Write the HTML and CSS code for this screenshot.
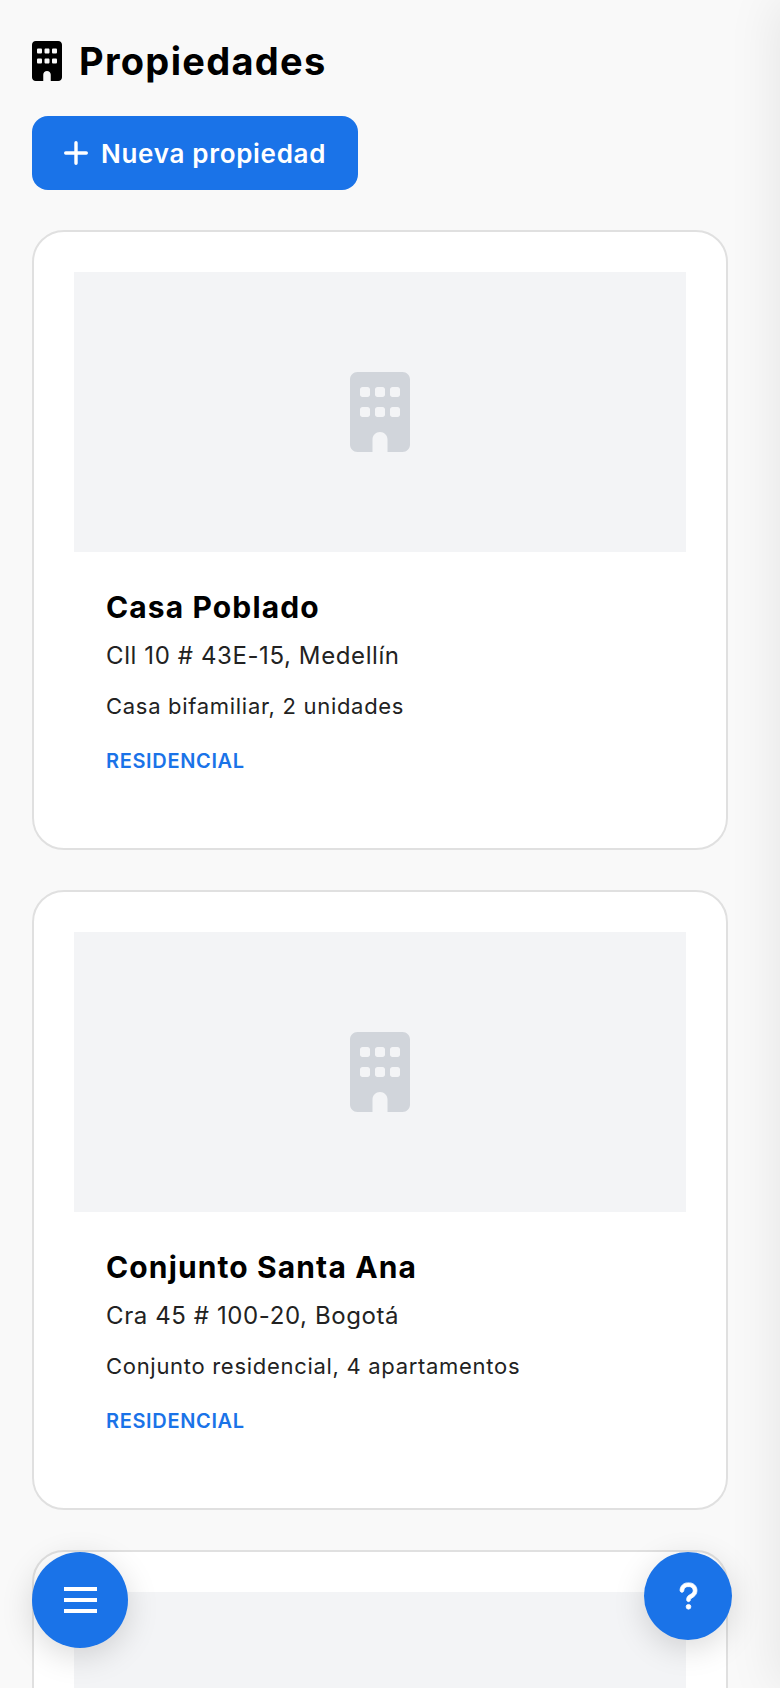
FILE: index.html
```html
<!DOCTYPE html>
<html lang="es">
<head>
<meta charset="utf-8">
<title>Propiedades</title>
<link rel="stylesheet" href="styles.css">
</head>
<body>
<svg class="sprite" width="0" height="0" aria-hidden="true">
  <symbol id="building" viewBox="0 0 384 512"><path d="M48 0C21.5 0 0 21.5 0 48V464c0 26.5 21.5 48 48 48h96V432c0-26.5 21.5-48 48-48s48 21.5 48 48v80h96c26.5 0 48-21.5 48-48V48c0-26.5-21.5-48-48-48H48zM64 240c0-8.8 7.2-16 16-16h32c8.8 0 16 7.2 16 16v32c0 8.8-7.2 16-16 16H80c-8.8 0-16-7.2-16-16V240zm112-16h32c8.8 0 16 7.2 16 16v32c0 8.8-7.2 16-16 16H176c-8.8 0-16-7.2-16-16V240c0-8.8 7.2-16 16-16zm80 16c0-8.8 7.2-16 16-16h32c8.8 0 16 7.2 16 16v32c0 8.8-7.2 16-16 16H272c-8.8 0-16-7.2-16-16V240zM80 96h32c8.8 0 16 7.2 16 16v32c0 8.8-7.2 16-16 16H80c-8.8 0-16-7.2-16-16V112c0-8.8 7.2-16 16-16zm80 16c0-8.8 7.2-16 16-16h32c8.8 0 16 7.2 16 16v32c0 8.8-7.2 16-16 16H176c-8.8 0-16-7.2-16-16V112zM272 96h32c8.8 0 16 7.2 16 16v32c0 8.8-7.2 16-16 16H272c-8.8 0-16-7.2-16-16V112c0-8.8 7.2-16 16-16z"/></symbol>
</svg>
<main class="page">
  <h1 class="title"><svg class="title-icon"><use href="#building"/></svg>Propiedades</h1>
  <button class="add-btn" type="button">
    <svg class="plus" viewBox="0 0 24 24"><path d="M12 1.7v20.6M1.7 12h20.6"/></svg>
    <span>Nueva propiedad</span>
  </button>
  <section class="list">
    <article class="card">
      <div class="thumb"><svg class="thumb-icon"><use href="#building"/></svg></div>
      <div class="info">
        <h2 class="name">Casa Poblado</h2>
        <p class="address">Cll 10 # 43E-15, Medellín</p>
        <p class="desc">Casa bifamiliar, 2 unidades</p>
        <p class="tag">RESIDENCIAL</p>
      </div>
    </article>
    <article class="card">
      <div class="thumb"><svg class="thumb-icon"><use href="#building"/></svg></div>
      <div class="info">
        <h2 class="name">Conjunto Santa Ana</h2>
        <p class="address">Cra 45 # 100-20, Bogotá</p>
        <p class="desc">Conjunto residencial, 4 apartamentos</p>
        <p class="tag">RESIDENCIAL</p>
      </div>
    </article>
    <article class="card">
      <div class="thumb"><svg class="thumb-icon"><use href="#building"/></svg></div>
    </article>
  </section>
</main>
<button class="fab fab-menu" type="button" aria-label="Menú">
  <svg class="bars" viewBox="0 0 33 26"><path d="M0 2h33M0 13h33M0 24h33"/></svg>
</button>
<button class="fab fab-help" type="button" aria-label="Ayuda">
  <svg class="question" viewBox="0 0 320 512"><path d="M80 160c0-35.3 28.7-64 64-64h32c35.3 0 64 28.7 64 64v3.6c0 21.8-11.1 42.1-29.4 53.8l-42.2 27.1c-25.2 16.2-40.4 44.1-40.4 74V320c0 17.7 14.3 32 32 32s32-14.3 32-32v-1.4c0-8.2 4.2-15.8 11-20.2l42.2-27.1c36.6-23.6 58.8-64.1 58.8-107.7V160c0-70.7-57.3-128-128-128H144C73.3 32 16 89.3 16 160c0 17.7 14.3 32 32 32s32-14.3 32-32zm80 320a40 40 0 1 0 0-80 40 40 0 1 0 0 80z"/></svg>
</button>
<aside class="drawer"></aside>
</body>
</html>
```
FILE: styles.css
```css
* { box-sizing: border-box; }
html { overflow: hidden; height: 100%; }
body {
  margin: 0;
  height: 100%;
  overflow: hidden;
  background: #f9f9f9;
  color: #000;
  font-family: "Inter", "Liberation Sans", sans-serif;
}
.sprite { position: absolute; }
.page { padding: 32px 52px 32px 32px; }
.title {
  display: flex;
  align-items: center;
  gap: 17px;
  margin: 0 0 26px;
  height: 58px;
  font-size: 38px;
  line-height: 58px;
  font-weight: 700;
  letter-spacing: 1.3px;
}
.title-icon { width: 30px; height: 40px; fill: #000; flex: none; }
.add-btn {
  display: flex;
  align-items: center;
  gap: 13px;
  height: 74px;
  width: 326px;
  padding: 0 32px;
  border: 0;
  border-radius: 16px;
  background: #1a73e8;
  color: #fff;
  font: 600 26px "Inter", "Liberation Sans", sans-serif;
  letter-spacing: 0.7px;
  white-space: nowrap;
}
.plus { width: 24px; height: 24px; fill: none; stroke: #fff; stroke-width: 3.4; stroke-linecap: round; flex: none; }
.list { display: flex; flex-direction: column; gap: 40px; margin-top: 40px; }
.card {
  height: 620px;
  padding: 40px;
  background: #fff;
  border: 2px solid #e0e0e0;
  border-radius: 32px;
}
.thumb {
  display: flex;
  align-items: center;
  justify-content: center;
  height: 280px;
  background: #f3f4f6;
}
.thumb-icon { width: 60px; height: 80px; fill: #d1d5db; }
.info { padding: 33px 32px 32px; }
.name { margin: 0; font-size: 30px; line-height: 44px; font-weight: 700; letter-spacing: 1.12px; }
.address { margin: 10px 0 0; font-size: 24px; line-height: 34px; color: #222; letter-spacing: 0.6px; }
.desc { margin: 17px 0 0; font-size: 22px; line-height: 32px; color: #222; letter-spacing: 0.7px; }
.tag { margin: 25px 0 0; font-size: 20px; line-height: 28px; font-weight: 600; color: #1a73e8; letter-spacing: 0.65px; }
.fab {
  position: fixed;
  display: flex;
  align-items: center;
  justify-content: center;
  padding: 0;
  border: 0;
  border-radius: 50%;
  background: #1a73e8;
  box-shadow: 0 8px 32px rgba(0, 0, 0, 0.15);
}
.fab-menu { left: 32px; top: 1552px; width: 96px; height: 96px; }
.fab-help { right: 48px; top: 1552px; width: 88px; height: 88px; }
.bars { width: 33px; height: 26px; fill: none; stroke: #fff; stroke-width: 4; }
.question { width: 19px; height: 30px; fill: #fff; stroke: #fff; stroke-width: 14; }
.drawer {
  position: fixed;
  top: 0;
  bottom: 0;
  left: 100%;
  width: 320px;
  box-shadow: -4px 0 48px rgba(0, 0, 0, 0.08);
}
```
